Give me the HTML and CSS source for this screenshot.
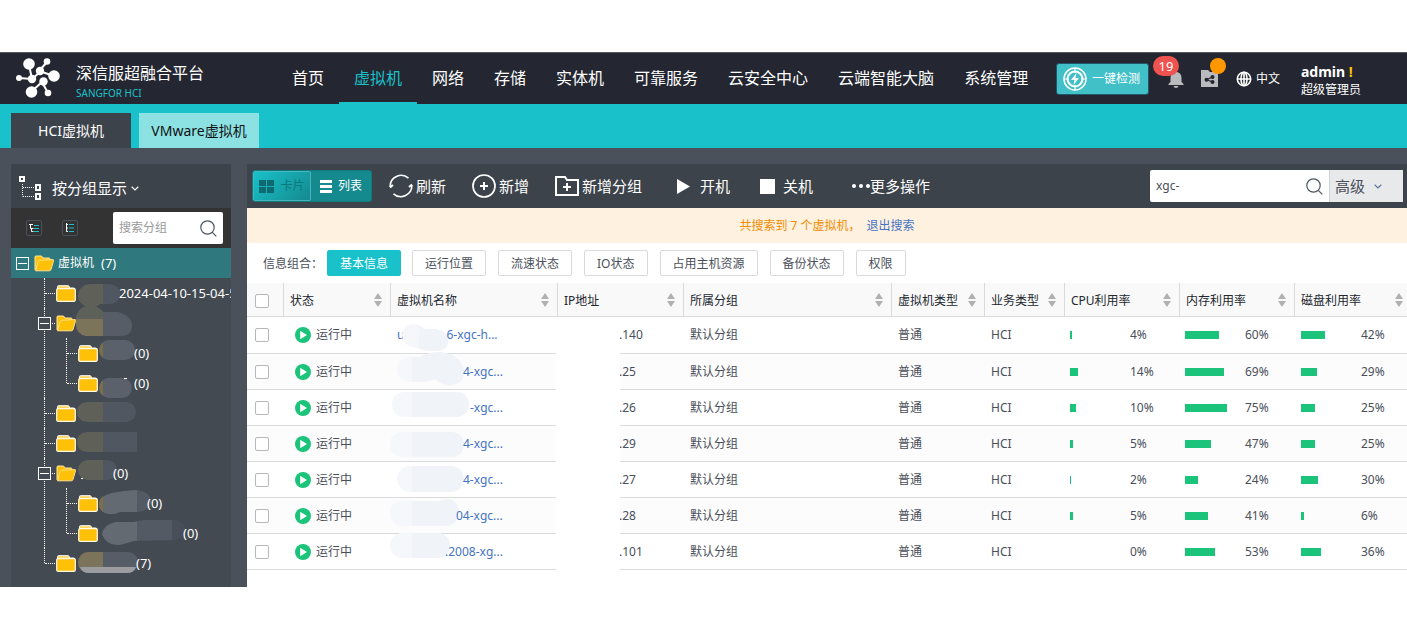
FILE: index.html
```html
<!DOCTYPE html>
<html lang="zh-CN">
<head>
<meta charset="utf-8">
<title>深信服超融合平台</title>
<link rel="stylesheet" href="styles.css">
</head>
<body>
<svg class="defs" width="0" height="0" aria-hidden="true">
  <defs>
    <linearGradient id="g-name" gradientUnits="userSpaceOnUse" x1="0" y1="0" x2="100" y2="0"><stop offset=".15" stop-color="#f5f7fa"/><stop offset=".15" stop-color="#f0f3f8"/></linearGradient>
    <linearGradient id="g-t1" gradientUnits="userSpaceOnUse" x1="0" y1="0" x2="100" y2="0"><stop offset=".25" stop-color="#5f6159"/><stop offset=".25" stop-color="#505761"/></linearGradient>
    <linearGradient id="g-t2" gradientUnits="userSpaceOnUse" x1="0" y1="0" x2="100" y2="0"><stop offset=".25" stop-color="#7b745b"/><stop offset=".25" stop-color="#575d66"/></linearGradient>
    <linearGradient id="g-t3" gradientUnits="userSpaceOnUse" x1="0" y1="0" x2="100" y2="0"><stop offset=".03" stop-color="#7a6f4c"/><stop offset=".03" stop-color="#5a616a"/></linearGradient>
    <linearGradient id="g-t4" gradientUnits="userSpaceOnUse" x1="0" y1="0" x2="100" y2="0"><stop offset=".37" stop-color="#646a71"/><stop offset=".37" stop-color="#545a63"/><stop offset=".72" stop-color="#545a63"/><stop offset=".72" stop-color="#494f59"/></linearGradient>
    <symbol id="folder" viewBox="0 0 20 17"><path d="M1.500 4V1.700Q1.500.7 2.500.7H12q1 0 1.200 1l.3 1.300h4.200q1 0 1 1v1" fill="#ffd75e" stroke="#fff"/><rect x=".7" y="3.700" width="18.600" height="12.600" rx="1.200" fill="#ffc107" stroke="#fffbe8" stroke-width="1.200"/></symbol>
    <symbol id="folder-open" viewBox="0 0 20 17"><path d="M1 15V2q0-1 1-1h5.500l1.500 2H15q1 0 1 1v2" fill="#ffc107" stroke="#ffe9a0"/><path d="M4.200 6.500Q4.500 5.500 5.500 5.300L19 4.600q.8 0 .6 1L17 14.500q-.4 1.300-1.600 1.300H1.500Z" fill="#ffc107" stroke="#ffe08a"/></symbol>
    <symbol id="sort" viewBox="0 0 8 14"><path d="M4 0 8 6H0ZM0 8h8l-4 6Z" fill="#b0b0b0"/></symbol>
    <symbol id="run" viewBox="0 0 16 16"><circle cx="8" cy="8" r="8" fill="#1bc47a"/><path d="M5.200 3.800v8.400L12 8Z" fill="#fff"/></symbol>
    <symbol id="lens" viewBox="0 0 17 17"><g fill="none" stroke="#4f5762" stroke-width="1.200"><circle cx="7.500" cy="7.500" r="6.700"/><path d="m12.300 12.300 4 4"/></g></symbol>
    <symbol id="chevron" viewBox="0 0 8 5"><path d="m.7.7 3.300 3.200L7.300.7" fill="none" stroke="currentColor" stroke-width="1.200"/></symbol>
  </defs>
</svg>

<header class="topbar">
  <svg class="logo" width="44" height="40" viewBox="0 0 44 40" aria-hidden="true"><g fill="#fff" stroke="#fff"><path d="M13 7l3 14L3 20M23 13l8-9M23 13l15 5M16 21L3 20M16 21l8-7M26 24L15 34M26 24l6 11" fill="none" stroke-width="2"/><g stroke="none"><circle cx="13" cy="6" r="5.800"/><circle cx="31" cy="3.500" r="3.300"/><circle cx="24" cy="13" r="4.200"/><circle cx="38" cy="18" r="5.800"/><circle cx="3" cy="20" r="3"/><circle cx="16" cy="21" r="4.200"/><circle cx="27.500" cy="23.500" r="4.200"/><circle cx="15.500" cy="34" r="5.800"/><circle cx="32" cy="35" r="3.300"/></g></g></svg>
  <div class="brand"><span class="brand-name">深信服超融合平台</span><span class="brand-sub">SANGFOR HCI</span></div>
  <nav class="nav">
    <a href="#">首页</a><a href="#" class="active">虚拟机</a><a href="#">网络</a><a href="#">存储</a><a href="#">实体机</a><a href="#">可靠服务</a><a href="#">云安全中心</a><a href="#">云端智能大脑</a><a href="#">系统管理</a>
  </nav>
  <div class="tools">
    <button class="detect" type="button"><svg width="24" height="24" viewBox="0 0 24 24" aria-hidden="true"><g fill="none" stroke="#fff"><circle cx="12" cy="12" r="11" stroke-width="1.500"/><circle cx="12" cy="12" r="7.500" stroke-width="2"/><path d="M12 1v5M12 18v5M1 12h5M18 12h5" stroke-width="1.200"/></g><path d="M13.500 6 8 13h3.500l-1 5 5.500-7h-3.500Z" fill="#fff"/></svg>一键检测</button>
    <button class="icon-btn bell" type="button" aria-label="告警"><svg width="16" height="18" viewBox="0 0 16 18" aria-hidden="true"><path d="M7 0h2v2q4.500 1 4.500 6v4l2 2v1H.5v-1l2-2V8q0-5 4.500-6ZM5.500 16h5q-.5 2-2.500 2t-2.500-2Z" fill="#b9bbbe"/></svg><span class="badge">19</span></button>
    <button class="icon-btn task" type="button" aria-label="任务"><svg width="17" height="17" viewBox="0 0 17 17" aria-hidden="true"><path d="M0 0h7l2 2h8v15H0Z" fill="#b9bbbe"/><path d="m11.500 7-6 2.700 5.500 2" stroke="#242731" stroke-width="1.200" fill="none"/><circle cx="11.500" cy="7" r="2" fill="#242731"/><circle cx="5.500" cy="9.700" r="2" fill="#242731"/><circle cx="11.500" cy="12" r="2" fill="#242731"/></svg><span class="dot"></span></button>
    <button class="lang" type="button"><svg width="16" height="16" viewBox="0 0 16 16" aria-hidden="true"><g fill="none" stroke="#fff" stroke-width="1.600"><circle cx="8" cy="8" r="6.700"/><ellipse cx="8" cy="8" rx="3" ry="6.700"/><path d="M1.500 8h13M8 1v14"/></g></svg>中文</button>
    <div class="user"><strong>admin <em>!</em></strong><span>超级管理员</span></div>
  </div>
</header>

<div class="tabs">
  <a class="tab current" href="#">HCI虚拟机</a>
  <a class="tab" href="#">VMware虚拟机</a>
</div>

<div class="workspace">
  <aside class="side">
    <button class="group-mode" type="button"><svg width="24" height="26" viewBox="0 0 24 26" aria-hidden="true"><g fill="none" stroke="#fff" stroke-width="2"><rect x="1" y="2" width="4" height="4"/><rect x="17" y="10" width="4" height="5"/><rect x="17" y="19" width="4" height="5"/></g><path d="M3.500 9v12.500M4 12.500h11M4 21.500h11" stroke="#fff" stroke-dasharray="1 1" fill="none"/></svg>按分组显示<svg width="8" height="5" aria-hidden="true"><use href="#chevron"/></svg></button>
    <div class="side-tools">
      <button type="button" aria-label="展开"><svg width="10" height="10" viewBox="0 0 10 10" aria-hidden="true"><path d="M0 1.500h4M1.500 1v4.500h3M2.500 5.500v3h2" fill="none" stroke="#fff"/><path d="M5 2.500h5M5 5.500h5M5 8.500h5" stroke="#19c1ca"/></svg></button>
      <button type="button" aria-label="收起"><svg width="10" height="10" viewBox="0 0 10 10" aria-hidden="true"><path d="M1.500 0v8.500H3M1.500 1.500H3M1.500 5H3" fill="none" stroke="#fff"/><path d="M4 1.500h5M4 5h5M4 8.500h5" stroke="#19c1ca"/></svg></button>
      <label class="side-search"><input type="text" placeholder="搜索分组" aria-label="搜索分组"><svg width="17" height="17" aria-hidden="true"><use href="#lens"/></svg></label>
    </div>
    <div class="root"><button class="toggle" type="button" aria-label="收起虚拟机"></button><svg width="20" height="17"><use href="#folder-open"/></svg><span class="root-name">虚拟机</span><span class="count">(7)</span></div>
    <ul class="tree">
      <li><div class="node"><svg width="20" height="17"><use href="#folder"/></svg><svg class="smudge" width="41" height="30"><path d="M0 18Q1 6 14 6H31Q42 7 42 17 41 26 30 26H22Q18 30 10 29 0 26 0 18Z" fill="url(#g-t1)"/></svg><span>2024-04-10-15-04-5</span></div></li>
      <li><div class="node"><button class="toggle" type="button" aria-label="收起"></button><svg width="20" height="17"><use href="#folder-open"/></svg><svg class="smudge" width="56" height="30"><path d="M-2 11Q0-2 12-2 20-2 25 4H40Q54 8 54 18 54 28 42 28H8Q-2 26-2 16Z" fill="url(#g-t2)"/><path d="M-2 11Q0-2 12-2 20-2 25 4V11Z" fill="#5e6159"/></svg></div>
        <ul>
          <li><div class="node"><svg width="20" height="17"><use href="#folder"/></svg><svg class="smudge" width="34" height="30"><rect x="-1" y="2" width="36" height="20" rx="10" fill="url(#g-t3)"/></svg><span>(0)</span></div></li>
          <li><div class="node"><svg width="20" height="17"><use href="#folder"/></svg><svg class="smudge" width="34" height="30"><rect x="-1" y="10" width="33" height="20" rx="10" fill="url(#g-t3)"/><path d="M24 10.500h3" stroke="#fff"/></svg><span>(0)</span></div></li>
        </ul>
      </li>
      <li><div class="node"><svg width="20" height="17"><use href="#folder"/></svg><svg class="smudge" width="60" height="30"><rect x="-1" y="4" width="59" height="20" rx="10" fill="url(#g-t1)"/></svg></div></li>
      <li><div class="node"><svg width="20" height="17"><use href="#folder"/></svg><svg class="smudge" width="60" height="30"><path d="M9 4H59V24H9Q-1 23-1 14T9 4Z" fill="url(#g-t1)"/></svg></div></li>
      <li><div class="node"><button class="toggle" type="button" aria-label="收起"></button><svg width="20" height="17"><use href="#folder-open"/></svg><svg class="smudge" width="35" height="30"><rect x="0" y="2" width="39" height="20" rx="10" fill="url(#g-t1)"/><path d="M3 20.500h2" stroke="#fff"/></svg><span>(0)</span></div>
        <ul>
          <li><div class="node"><svg width="20" height="17"><use href="#folder"/></svg><svg class="smudge" width="47" height="30"><path d="M-1 16Q0 8 12 5L24 3 37 2Q51 4 51 14 50 23 37 24H20Q14 27 8 26-1 24-1 16Z" fill="url(#g-t4)"/><path d="M3 8Q-1 11-1 16-1 21 3 24Z" fill="#7a6f4c"/></svg><span>(0)</span></div></li>
          <li><div class="node"><svg width="20" height="17"><use href="#folder"/></svg><svg class="smudge" width="83" height="30"><path d="M2 16Q4 6 16 4H34L44 2H75Q85 4 85 12T75 22L34 23 20 27Q6 28 2 16Z" fill="url(#g-t4)"/></svg><span>(0)</span></div></li>
        </ul>
      </li>
      <li><div class="node"><svg width="20" height="17"><use href="#folder"/></svg><svg class="smudge" width="58" height="30"><rect x="0" y="4" width="60" height="21" rx="10" fill="url(#g-t2)"/><path d="M2 19H58Q56 25 49 25H11Q4 25 2 19Z" fill="#9b9da1"/></svg><span>(7)</span></div></li>
    </ul>
  </aside>

  <main class="main">
    <div class="toolbar">
      <div class="segment">
        <button class="seg-card" type="button"><svg width="15" height="13" viewBox="0 0 15 13" aria-hidden="true"><path d="M0 0h7v6H0ZM8 0h7v6H8ZM0 7h7v6H0ZM8 7h7v6H8Z" fill="#0d6a70"/></svg>卡片</button>
        <button class="seg-list" type="button"><svg width="12" height="13" viewBox="0 0 12 13" aria-hidden="true"><path d="M0 0h12v3H0ZM0 5h12v3H0ZM0 10h12v3H0Z" fill="#fff"/></svg>列表</button>
      </div>
      <button class="act" type="button"><svg width="24" height="24" viewBox="0 0 24 24" aria-hidden="true"><g fill="none" stroke="#fff" stroke-width="1.600"><path d="M1.200 13A11 11 0 0 1 19.500 4.200M22.800 11A11 11 0 0 1 4.500 19.800"/><path d="m1 13.500 3-2.500M23 10.500 20 13" stroke-width="2"/></g></svg>刷新</button>
      <button class="act" type="button"><svg width="24" height="24" viewBox="0 0 24 24" aria-hidden="true"><g fill="none" stroke="#fff"><circle cx="12" cy="12" r="11" stroke-width="1.700"/><path d="M12 8v8M8 12h8" stroke-width="2"/></g></svg>新增</button>
      <button class="act" type="button"><svg width="24" height="20" viewBox="0 0 24 20" aria-hidden="true"><path d="M1 1h9l2 3h11v15H1ZM12 7v8M8 11h8" fill="none" stroke="#fff" stroke-width="2"/></svg>新增分组</button>
      <button class="act wide" type="button"><svg width="13" height="15" viewBox="0 0 13 15" aria-hidden="true"><path d="M0 0v15l13-7.500Z" fill="#fff"/></svg>开机</button>
      <button class="act stop" type="button"><svg width="15" height="15" aria-hidden="true"><path d="M0 0h15v15H0Z" fill="#fff"/></svg>关机</button>
      <button class="act more" type="button"><svg width="18" height="4" viewBox="0 0 18 4" aria-hidden="true"><g fill="#fff"><circle cx="2" cy="2" r="2"/><circle cx="9" cy="2" r="2"/><circle cx="16" cy="2" r="2"/></g></svg>更多操作</button>
      <div class="search"><input type="text" value="xgc-" aria-label="搜索虚拟机"><svg width="17" height="17" aria-hidden="true"><use href="#lens"/></svg></div>
      <button class="advanced" type="button">高级<svg width="8" height="5" aria-hidden="true"><use href="#chevron"/></svg></button>
    </div>
    <p class="notice"><span>共搜索到 7 个虚拟机，</span><a href="#">退出搜索</a></p>
    <div class="filters"><span class="filters-label">信息组合：</span><button class="on" type="button">基本信息</button><button type="button">运行位置</button><button type="button">流速状态</button><button type="button">IO状态</button><button type="button">占用主机资源</button><button type="button">备份状态</button><button type="button">权限</button></div>
    <table class="vms">
      <colgroup><col class="c-check"><col class="c-status"><col class="c-name"><col class="c-ip"><col><col class="c-type"><col class="c-biz"><col class="c-use"><col class="c-use"><col class="c-disk"></colgroup>
      <thead><tr>
        <th><input type="checkbox" aria-label="全选"></th>
        <th><div><span>状态</span><svg width="8" height="14"><use href="#sort"/></svg></div></th>
        <th><div><span>虚拟机名称</span><svg width="8" height="14"><use href="#sort"/></svg></div></th>
        <th><div><span>IP地址</span><svg width="8" height="14"><use href="#sort"/></svg></div></th>
        <th><div><span>所属分组</span><svg width="8" height="14"><use href="#sort"/></svg></div></th>
        <th><div><span>虚拟机类型</span><svg width="8" height="14"><use href="#sort"/></svg></div></th>
        <th><div><span>业务类型</span><svg width="8" height="14"><use href="#sort"/></svg></div></th>
        <th><div><span>CPU利用率</span><svg width="8" height="14"><use href="#sort"/></svg></div></th>
        <th><div><span>内存利用率</span><svg width="8" height="14"><use href="#sort"/></svg></div></th>
        <th><div><span>磁盘利用率</span><svg width="8" height="14"><use href="#sort"/></svg></div></th>
      </tr></thead>
      <tbody>
        <tr><td><input type="checkbox" aria-label="选择 .140"></td><td><div class="status"><svg width="16" height="16"><use href="#run"/></svg>运行中</div></td><td><a class="name" href="#">u<svg class="smudge" width="42" height="35"><path d="M-2 16Q0 6 9 6 16 6 20 11H32Q44 13 44 22 44 33 32 33H22L14 30Q-2 29-2 16Z" fill="url(#g-name)"/></svg>6-xgc-h...</a></td><td class="ip">.140</td><td>默认分组</td><td>普通</td><td>HCI</td><td><div class="use"><i><b style="width:4%"></b></i>4%</div></td><td><div class="use"><i><b style="width:60%"></b></i>60%</div></td><td><div class="use"><i><b style="width:42%"></b></i>42%</div></td></tr>
        <tr><td><input type="checkbox" aria-label="选择 .25"></td><td><div class="status"><svg width="16" height="16"><use href="#run"/></svg>运行中</div></td><td><a class="name" href="#"><svg class="smudge" width="66" height="35"><path d="M12 3H22Q32-2 42-2 62-1 67 15 68 31 53 31 44 31 38 25L28 28H12Q0 26 0 15T12 3Z" fill="url(#g-name)"/></svg>4-xgc...</a></td><td class="ip">.25</td><td>默认分组</td><td>普通</td><td>HCI</td><td><div class="use"><i><b style="width:14%"></b></i>14%</div></td><td><div class="use"><i><b style="width:69%"></b></i>69%</div></td><td><div class="use"><i><b style="width:29%"></b></i>29%</div></td></tr>
        <tr><td><input type="checkbox" aria-label="选择 .26"></td><td><div class="status"><svg width="16" height="16"><use href="#run"/></svg>运行中</div></td><td><a class="name" href="#"><svg class="smudge" width="73" height="35"><rect x="-5" y="2" width="77" height="25" rx="12" fill="url(#g-name)"/></svg>-xgc...</a></td><td class="ip">.26</td><td>默认分组</td><td>普通</td><td>HCI</td><td><div class="use"><i><b style="width:10%"></b></i>10%</div></td><td><div class="use"><i><b style="width:75%"></b></i>75%</div></td><td><div class="use"><i><b style="width:25%"></b></i>25%</div></td></tr>
        <tr><td><input type="checkbox" aria-label="选择 .29"></td><td><div class="status"><svg width="16" height="16"><use href="#run"/></svg>运行中</div></td><td><a class="name" href="#"><svg class="smudge" width="66" height="35"><rect x="-7" y="6" width="74" height="25" rx="12" fill="url(#g-name)"/></svg>4-xgc...</a></td><td class="ip">.29</td><td>默认分组</td><td>普通</td><td>HCI</td><td><div class="use"><i><b style="width:5%"></b></i>5%</div></td><td><div class="use"><i><b style="width:47%"></b></i>47%</div></td><td><div class="use"><i><b style="width:25%"></b></i>25%</div></td></tr>
        <tr><td><input type="checkbox" aria-label="选择 .27"></td><td><div class="status"><svg width="16" height="16"><use href="#run"/></svg>运行中</div></td><td><a class="name" href="#"><svg class="smudge" width="66" height="35"><rect x="0" y="4" width="67" height="26" rx="13" fill="url(#g-name)"/></svg>4-xgc...</a></td><td class="ip">.27</td><td>默认分组</td><td>普通</td><td>HCI</td><td><div class="use"><i><b style="width:2%"></b></i>2%</div></td><td><div class="use"><i><b style="width:24%"></b></i>24%</div></td><td><div class="use"><i><b style="width:30%"></b></i>30%</div></td></tr>
        <tr><td><input type="checkbox" aria-label="选择 .28"></td><td><div class="status"><svg width="16" height="16"><use href="#run"/></svg>运行中</div></td><td><a class="name" href="#"><svg class="smudge" width="59" height="35"><path d="M5 3H42Q46 1 52 1 62 3 62 14 60 28 48 28H5Q-7 27-7 15T5 3Z" fill="url(#g-name)"/></svg>04-xgc...</a></td><td class="ip">.28</td><td>默认分组</td><td>普通</td><td>HCI</td><td><div class="use"><i><b style="width:5%"></b></i>5%</div></td><td><div class="use"><i><b style="width:41%"></b></i>41%</div></td><td><div class="use"><i><b style="width:6%"></b></i>6%</div></td></tr>
        <tr><td><input type="checkbox" aria-label="选择 .101"></td><td><div class="status"><svg width="16" height="16"><use href="#run"/></svg>运行中</div></td><td><a class="name" href="#"><svg class="smudge" width="48" height="35"><rect x="-7" y="-1" width="60" height="25" rx="12" fill="url(#g-name)"/></svg>.2008-xg...</a></td><td class="ip">.101</td><td>默认分组</td><td>普通</td><td>HCI</td><td><div class="use"><i><b style="width:0%"></b></i>0%</div></td><td><div class="use"><i><b style="width:53%"></b></i>53%</div></td><td><div class="use"><i><b style="width:36%"></b></i>36%</div></td></tr>
      </tbody>
    </table>
  </main>
</div>
</body>
</html>
```

FILE: styles.css
```css
* { box-sizing: border-box; }
body { margin: 0; padding-top: 52px; background: #fff; font: 12px/18px "Noto Sans", "Noto Sans CJK SC", sans-serif; color: #4a4f5a; overflow-x: hidden; }
a { color: inherit; text-decoration: none; }
button, input { font: inherit; color: inherit; }
button { border: 0; padding: 0; background: none; cursor: pointer; white-space: nowrap; }
ul { list-style: none; margin: 0; padding: 0; }
svg { flex: none; }
.defs { position: absolute; }
.smudge { overflow: visible; }

.topbar { display: flex; height: 52px; background: #242731; border-top: 1px solid #55585f; color: #fff; }
.logo { margin: 5px 16px 0; }
.brand { display: flex; flex-direction: column; padding-top: 9px; width: 201px; }
.brand-name { font-size: 16px; line-height: 23px; }
.brand-sub { font-size: 10px; line-height: 16px; color: #19c1ca; }
.nav { display: flex; font-size: 16px; line-height: 51px; white-space: nowrap; }
.nav a { padding: 0 15px; }
.nav .active { color: #19c1ca; border-bottom: 2px solid #19c1ca; }
.tools { display: flex; align-items: center; margin-left: auto; padding-right: 46px; }
.tools .detect { display: flex; align-items: center; gap: 5px; height: 32px; padding: 0 8px 0 6px; border: 1px solid #22566b; border-radius: 3px; background: #41c0c8; color: #fff; }
.icon-btn { position: relative; display: flex; }
.bell { margin-left: 19px; }
.task { margin-left: 17px; }
.badge { position: absolute; left: -15px; top: -14px; width: 26px; height: 20px; border-radius: 10px; background: #ef5350; color: #fff; font-size: 13px; line-height: 20px; }
.dot { position: absolute; right: -8px; top: -12px; width: 16px; height: 16px; border-radius: 8px; background: #ff9800; }
.lang { display: flex; align-items: center; gap: 4px; margin-left: 18px; }
.user { display: flex; flex-direction: column; margin-left: 21px; padding-top: 4px; }
.user strong { font-size: 14px; }
.user em { color: #ffc107; font-style: normal; }

.tabs { display: flex; gap: 8px; height: 44px; padding: 9px 11px 0; background: #19c1ca; }
.tab { width: 120px; font-size: 14px; line-height: 36px; text-align: center; white-space: nowrap; background: #8ce1e3; color: #111; }
.tab.current { background: #3d434b; color: #fff; }

.workspace { display: flex; gap: 16px; padding: 16px 0 0 11px; background: #4a515b; }
.side { width: 220px; flex: none; padding-bottom: 9px; background: #434a52; color: #fff; overflow: hidden; }
.group-mode { display: flex; align-items: center; width: 100%; height: 44px; padding: 4px 0 0 8px; background: #3d434b; font-size: 15px; }
.group-mode svg:first-child { margin-right: 9px; }
.group-mode svg:last-child { margin-left: 4px; }
.side-tools { display: flex; align-items: center; height: 40px; padding: 0 8px 0 15px; gap: 20px; background: #333; }
.side-tools button { display: flex; align-items: center; justify-content: center; width: 16px; height: 16px; border: 1px solid #4a515b; border-radius: 2px; }
.side-search { display: flex; align-items: center; width: 110px; height: 32px; margin-left: auto; padding: 0 6px; background: #fff; border-radius: 2px; }
.side-search input { flex: 1; min-width: 0; border: 0; padding: 0; background: none; outline: 0; color: #333; }
.side-search input::placeholder { color: #999; }
.root { display: flex; align-items: center; height: 30px; padding-left: 5px; background: #2f787d; }
.root .toggle { margin-right: 5px; }
.root-name { margin: 0 7px 0 4px; }
.count { font-size: 13px; }
.toggle { display: flex; align-items: center; justify-content: center; width: 13px; height: 13px; border: 1px solid #fff; background: #434a52; }
.root .toggle { background: #2f787d; }
.toggle::before { content: ""; width: 9px; height: 1px; background: #fff; }
.tree { font-size: 13px; }
.tree li { position: relative; padding-left: 45px; }
.tree li::before { content: ""; position: absolute; left: 33px; top: 0; bottom: 0; border-left: 1px dotted #fff; }
.tree li:last-child::before { bottom: auto; height: 15px; }
.tree ul { margin-left: -23px; }
.node { position: relative; display: flex; align-items: center; gap: 2px; height: 30px; white-space: nowrap; }
.node::before { content: ""; position: absolute; left: -11px; top: 15px; width: 10px; border-top: 1px dotted #fff; }
.node .toggle { position: absolute; left: -18px; top: 9px; }
.node span { margin-left: -2px; }

.main { flex: 1; min-width: 0; background: #fff; }
.toolbar { display: flex; align-items: center; height: 44px; padding: 0 4px 0 5px; background: #3d434b; color: #fff; }
.segment { display: flex; width: 120px; height: 32px; margin-right: 17px; border-radius: 3px; background: #148a8f; border: 1px solid #14797e; }
.segment button { display: flex; flex: 1; align-items: center; justify-content: center; gap: 6px; }
.segment .seg-card { flex: none; width: 58px; border: 1px solid #45b5ba; border-radius: 2px; background: linear-gradient(135deg, #19c1ca, #148a8f); color: #0d777c; }
.act { display: flex; align-items: center; gap: 3px; margin-right: 26px; font-size: 15px; line-height: 22px; }
.act.wide { gap: 10px; margin-left: 9px; margin-right: 30px; }
.act.stop { gap: 8px; margin-right: 39px; }
.act.more { gap: 0; }
.search { display: flex; align-items: center; width: 179px; height: 32px; margin-left: auto; padding: 0 6px; border-radius: 2px 0 0 2px; background: #fff; }
.search input { flex: 1; min-width: 0; padding: 0; border: 0; outline: 0; background: none; color: #4a4f5a; }
.advanced { display: flex; align-items: center; gap: 9px; width: 74px; height: 32px; padding-left: 5px; border-left: 1px solid #d0d2d4; background: #e8e9ea; color: #4a4f5a; font-size: 15px; }
.advanced svg { color: #5b7899; }

.notice { display: flex; align-items: center; justify-content: center; gap: 6px; height: 35px; margin: 0; background: #fff1e0; color: #f08c00; }
.notice a { color: #4573c4; }
.filters { display: flex; align-items: center; gap: 12px; height: 40px; padding-left: 16px; }
.filters-label { width: 52px; padding-top: 2px; white-space: nowrap; }
.filters button { height: 26px; padding: 2px 12px 0; border: 1px solid #d9dadb; border-radius: 2px; background: #fff; }
.filters .on { margin-right: -1px; border-color: #19c1ca; background: #19c1ca; color: #fff; }

.vms { width: 100%; table-layout: fixed; border-collapse: separate; border-spacing: 0; }
.c-check { width: 37px; }
.c-status { width: 107px; }
.c-name { width: 167px; }
.c-ip { width: 126px; }
.c-type { width: 93px; }
.c-biz { width: 80px; }
.c-use { width: 115px; }
.c-disk { width: 112px; }
.vms th { height: 34px; padding: 0 8px 0 6px; border-right: 1px solid #d9dadb; border-bottom: 1px solid #d9dadb; background: #f9f9f9; color: #22262e; font-weight: normal; text-align: left; white-space: nowrap; }
.vms th div { display: flex; align-items: center; justify-content: space-between; }
.vms th span { padding-top: 2px; }
.vms th:last-child { border-right: 0; padding-right: 4px; }
.vms td { height: 36px; padding: 0 0 0 6px; border-bottom: 1px solid #d9dadb; white-space: nowrap; }
.vms tbody tr:first-child td { height: 37px; }
.vms tbody tr:nth-child(even) td { background: #fcfcfc; }
.vms th:first-child, .vms td:first-child { padding-left: 8px; }
.vms input { display: block; appearance: none; width: 14px; height: 14px; margin: 0; border: 1px solid #b5b7ba; border-radius: 2px; background: #fff; }
.vms th input { margin-top: 2px; }
.status { display: flex; align-items: center; gap: 5px; padding-left: 5px; }
.vms .name { display: flex; align-items: center; height: 35px; color: #4573c4; }
.vms .ip { position: relative; padding-left: 61px; }
.ip::before { content: ""; position: absolute; left: -2px; top: 0; bottom: -1px; width: 64px; background: #fff; }
.use { display: flex; align-items: center; }
.vms td:nth-child(8), .vms td:nth-child(9) { padding-left: 5px; }
.use i { width: 56px; margin-right: 4px; }
.use b { display: block; height: 8px; background: #1bc47a; }
```
